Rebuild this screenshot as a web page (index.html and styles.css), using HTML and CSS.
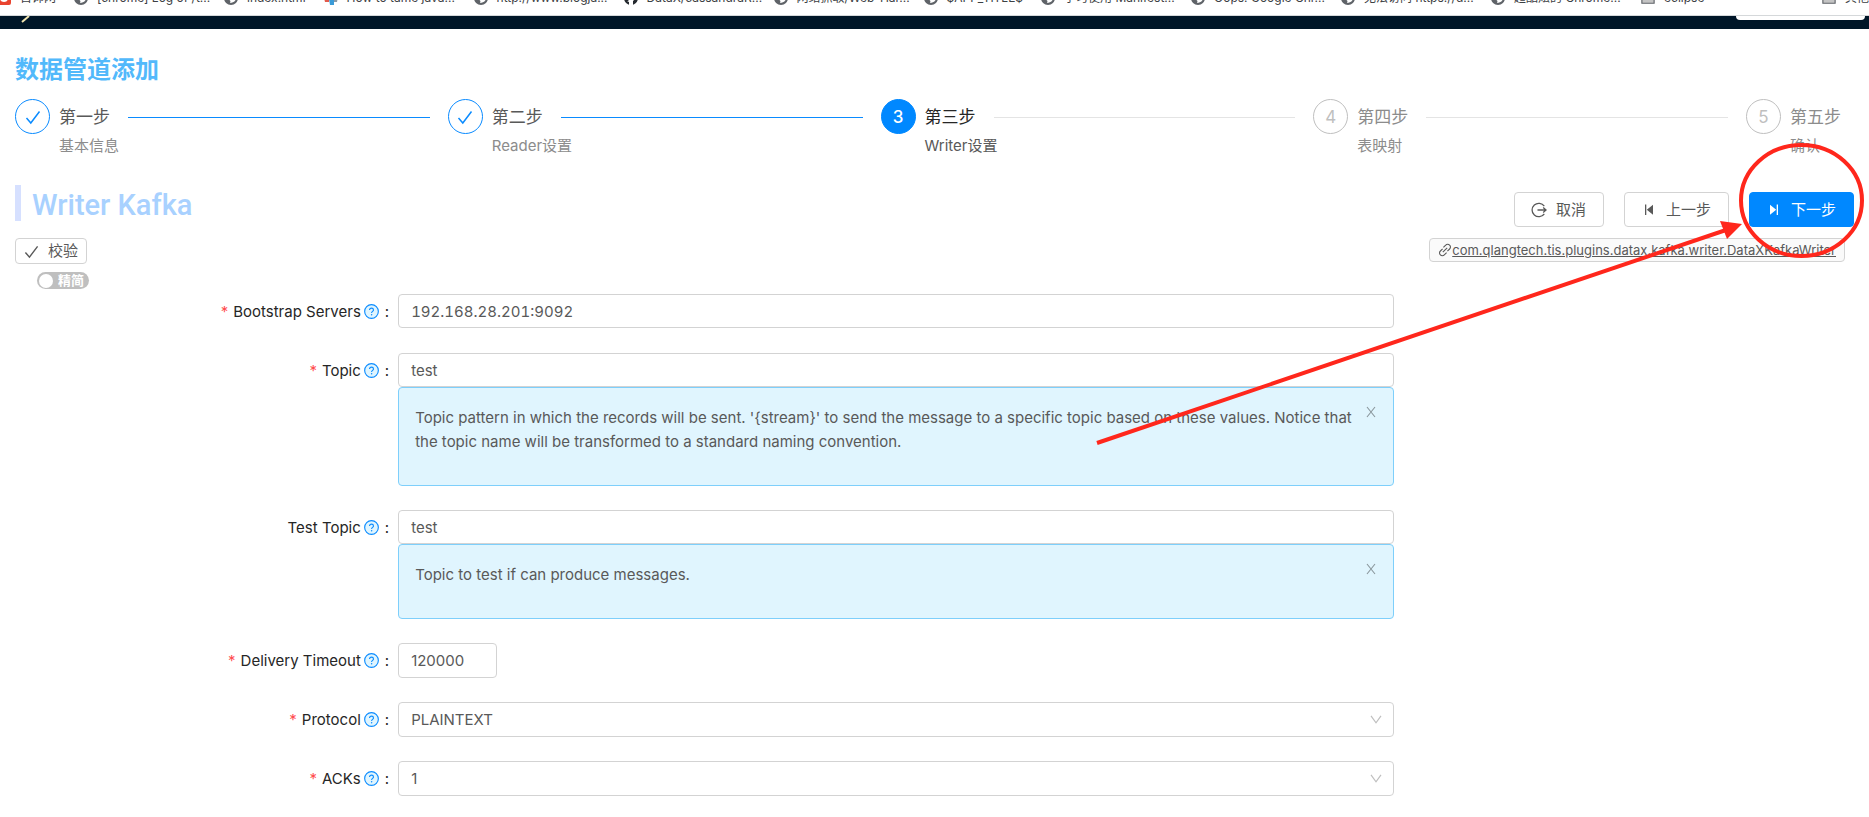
FILE: index.html
```html
<!DOCTYPE html>
<html lang="zh-CN">
<head>
<meta charset="utf-8">
<meta name="viewport" content="width=device-width, initial-scale=1">
<title>数据管道添加</title>
<link rel="stylesheet" href="styles.css">
</head>
<body>
<svg class="defs" aria-hidden="true">
  <symbol id="globe" viewBox="0 0 14 14"><circle cx="7" cy="7" r="7" fill="#5f6368"/><path d="M2 6c2 0 3 1 5 1s2-2 5-3v4c-1 3-4 4-6 4 1-2 0-3-1-3S2 8 2 6z" fill="#fff"/></symbol>
  <symbol id="folder" viewBox="0 0 16 14"><path d="M1 1h5l2 2h7v10H1z" fill="#c4c4c4" stroke="#5f6368" stroke-width="1.3"/></symbol>
  <symbol id="check" viewBox="0 0 16 16"><path d="M1.5 9l4.3 5L14.5 2.5" fill="none" stroke="currentColor" stroke-width="1.5"/></symbol>
  <symbol id="help" viewBox="0 0 16 16"><circle cx="8" cy="8" r="7.3" fill="#e0f5fe" stroke="#0a8bff" stroke-width="1.2"/><path d="M5.9 6.5c0-1.3.9-2.1 2.1-2.1s2.1.8 2.1 1.9c0 1.6-2 1.5-2 3.2" fill="none" stroke="#0a8bff" stroke-width="1.2"/><circle cx="8.1" cy="11.4" r=".8" fill="#0a8bff"/></symbol>
  <symbol id="close" viewBox="0 0 10 12"><path d="M1 1l8 10M9 1L1 11" fill="none" stroke="currentColor" stroke-width="1.1"/></symbol>
  <symbol id="down" viewBox="0 0 12 9"><path d="M1 .8l5 7 5-7" fill="none" stroke="currentColor" stroke-width="1.2"/></symbol>
</svg>

<nav class="bookmarks" aria-label="书签">
  <a class="bookmark" href="#"><svg class="bookmark-icon"><rect width="14" height="14" rx="2" fill="#e9432f"/><circle cx="7" cy="7" r="4" fill="#fff"/></svg><span>首饰网</span></a>
  <a class="bookmark bookmark-long" href="#"><svg class="bookmark-icon"><use href="#globe"/></svg><span>[chrome] Log of /t...</span></a>
  <a class="bookmark" href="#"><svg class="bookmark-icon"><use href="#globe"/></svg><span>index.html</span></a>
  <a class="bookmark bookmark-long" href="#"><svg class="bookmark-icon"><path d="M0 7h5v4H1z" fill="#e25b4c"/><path d="M5 8h5v6H6z" fill="#3a9bd8"/><path d="M10 6h4l-1 5h-3z" fill="#8a9aa8"/></svg><span>How to tame java...</span></a>
  <a class="bookmark bookmark-long" href="#"><svg class="bookmark-icon"><use href="#globe"/></svg><span>http://www.blogja...</span></a>
  <a class="bookmark bookmark-long" href="#"><svg class="bookmark-icon"><circle cx="7" cy="7" r="7" fill="#24292e"/><path d="M5 14v-3l-2-1 2 0c-2-1-2-4 0-5h4c2 1 2 4 0 5v4z" fill="#fff"/></svg><span>DataX/cassandraR...</span></a>
  <a class="bookmark bookmark-long" href="#"><svg class="bookmark-icon"><use href="#globe"/></svg><span>网络抓取/Web-Har...</span></a>
  <a class="bookmark" href="#"><svg class="bookmark-icon"><use href="#globe"/></svg><span>$APP_TITLE$</span></a>
  <a class="bookmark bookmark-long" href="#"><svg class="bookmark-icon"><use href="#globe"/></svg><span>学习使用 Manifest...</span></a>
  <a class="bookmark bookmark-long" href="#"><svg class="bookmark-icon"><use href="#globe"/></svg><span>Oops! Google Chr...</span></a>
  <a class="bookmark bookmark-long" href="#"><svg class="bookmark-icon"><use href="#globe"/></svg><span>无法访问 https://d...</span></a>
  <a class="bookmark bookmark-long" href="#"><svg class="bookmark-icon"><use href="#globe"/></svg><span>超酷炫的 Chrome...</span></a>
  <a class="bookmark" href="#"><svg class="bookmark-icon"><use href="#folder"/></svg><span>eclipse</span></a>
  <a class="bookmark bookmark-other" href="#"><svg class="bookmark-icon"><use href="#folder"/></svg><span>其他</span></a>
</nav>

<header class="topbar">
  <svg class="topbar-mark" width="10" height="7" aria-hidden="true"><path d="M1 6l7-6" stroke="#f3e6b0" stroke-width="2"/></svg>
  <div class="topbar-field"></div>
</header>

<main class="page">
  <h1 class="page-title">数据管道添加</h1>

  <ol class="steps">
    <li class="step step-done">
      <span class="step-icon"><svg width="16" height="16"><use href="#check"/></svg></span>
      <div class="step-body"><div class="step-title">第一步</div><div class="step-text">基本信息</div></div>
    </li>
    <li class="step step-done">
      <span class="step-icon"><svg width="16" height="16"><use href="#check"/></svg></span>
      <div class="step-body"><div class="step-title">第二步</div><div class="step-text">Reader设置</div></div>
    </li>
    <li class="step step-active" aria-current="step">
      <span class="step-icon">3</span>
      <div class="step-body"><div class="step-title">第三步</div><div class="step-text">Writer设置</div></div>
    </li>
    <li class="step">
      <span class="step-icon">4</span>
      <div class="step-body"><div class="step-title">第四步</div><div class="step-text">表映射</div></div>
    </li>
    <li class="step step-last">
      <span class="step-icon">5</span>
      <div class="step-body"><div class="step-title">第五步</div><div class="step-text">确认</div></div>
    </li>
  </ol>

  <div class="section-head">
    <h2 class="section-title">Writer Kafka</h2>
    <div class="actions">
      <button class="btn" type="button"><svg width="16" height="16" viewBox="0 0 16 16"><path d="M13.3 4.2A6.7 6.7 0 1 0 13.3 11.8M6.5 8h8M12.2 5.6L15 8l-2.8 2.4" fill="none" stroke="currentColor" stroke-width="1.3"/></svg><span>取消</span></button>
      <button class="btn" type="button"><svg width="16" height="16" viewBox="0 0 16 16"><path d="M4 2.5h1.3v10.5H4zM12 2.8v10L5.8 7.8z" fill="currentColor"/></svg><span>上一步</span></button>
      <button class="btn btn-primary" type="button"><svg width="16" height="16" viewBox="0 0 16 16"><path d="M10.7 2.5H12v10.5h-1.3zM4 2.8v10l6.2-5z" fill="currentColor"/></svg><span>下一步</span></button>
    </div>
  </div>

  <div class="toolbar">
    <button class="btn-small" type="button"><svg width="16" height="16"><use href="#check"/></svg><span>校验</span></button>
    <a class="plugin-tag" href="#"><svg width="14" height="14" viewBox="0 0 14 14"><g fill="none" stroke="currentColor" stroke-width="1.1"><path d="M5.4 4.4l2.3-2.3a2.6 2.6 0 0 1 3.9 0 2.6 2.6 0 0 1 0 3.9L9.4 8.2"/><path d="M8.6 9.6l-2.3 2.3a2.6 2.6 0 0 1-3.9 0 2.6 2.6 0 0 1 0-3.9L4.6 5.8"/><path d="M4.8 9.2l4.4-4.4"/></g></svg><span>com.qlangtech.tis.plugins.datax.kafka.writer.DataXKafkaWriter</span></a>
  </div>

  <label class="switch"><input class="switch-input" type="checkbox" role="switch"><span class="switch-text">精简</span></label>

  <form class="form">
    <div class="field">
      <label class="label" for="servers"><span class="required">*</span><span>Bootstrap Servers</span><svg class="help-icon"><use href="#help"/></svg><span class="colon">:</span></label>
      <div class="control"><input class="input input-host" id="servers" type="text" value="192.168.28.201:9092"></div>
    </div>
    <div class="field">
      <label class="label" for="topic"><span class="required">*</span><span>Topic</span><svg class="help-icon"><use href="#help"/></svg><span class="colon">:</span></label>
      <div class="control">
        <input class="input" id="topic" type="text" value="test">
        <div class="hint"><p class="hint-text">Topic pattern in which the records will be sent. '{stream}' to send the message to a specific topic based on these values. Notice that the topic name will be transformed to a standard naming convention.</p><button class="hint-close" type="button" aria-label="关闭"><svg width="10" height="12"><use href="#close"/></svg></button></div>
      </div>
    </div>
    <div class="field">
      <label class="label" for="test-topic"><span>Test Topic</span><svg class="help-icon"><use href="#help"/></svg><span class="colon">:</span></label>
      <div class="control">
        <input class="input" id="test-topic" type="text" value="test">
        <div class="hint"><p class="hint-text">Topic to test if can produce messages.</p><button class="hint-close" type="button" aria-label="关闭"><svg width="10" height="12"><use href="#close"/></svg></button></div>
      </div>
    </div>
    <div class="field">
      <label class="label" for="timeout"><span class="required">*</span><span>Delivery Timeout</span><svg class="help-icon"><use href="#help"/></svg><span class="colon">:</span></label>
      <div class="control"><input class="input input-number" id="timeout" type="text" inputmode="numeric" value="120000"></div>
    </div>
    <div class="field">
      <label class="label" for="protocol"><span class="required">*</span><span>Protocol</span><svg class="help-icon"><use href="#help"/></svg><span class="colon">:</span></label>
      <div class="control"><select class="input select" id="protocol"><option>PLAINTEXT</option></select><svg class="select-arrow"><use href="#down"/></svg></div>
    </div>
    <div class="field">
      <label class="label" for="acks"><span class="required">*</span><span>ACKs</span><svg class="help-icon"><use href="#help"/></svg><span class="colon">:</span></label>
      <div class="control"><select class="input select" id="acks"><option>1</option></select><svg class="select-arrow"><use href="#down"/></svg></div>
    </div>
  </form>
</main>

<svg class="callout" width="780" height="310" viewBox="1089 140 780 310" aria-hidden="true">
  <ellipse cx="1801.5" cy="200.5" rx="60.5" ry="55.5" fill="none" stroke="#ff271c" stroke-width="4"/>
  <path d="M1097 443L1726 230" stroke="#ff271c" stroke-width="4"/>
  <path d="M1742 224l-22-3 7 18z" fill="#ff271c"/>
</svg>
</body>
</html>
```

FILE: styles.css
```css
* { box-sizing: border-box; }

body {
  position: relative;
  margin: 0;
  background: #fff;
  color: #595959;
  font: 15px/24px Inter, "Noto Sans CJK SC", sans-serif;
}

button, input, select { font: inherit; color: inherit; }

.defs { position: absolute; width: 0; height: 0; }

.bookmarks {
  display: flex;
  align-items: flex-end;
  gap: 18px;
  height: 16px;
  margin-left: -3px;
  padding-bottom: 9px;
  overflow: hidden;
  border-bottom: 1px solid #d5d8da;
  font-size: 12px;
  line-height: 16px;
}
.bookmark {
  display: flex;
  flex: none;
  align-items: center;
  gap: 9px;
  color: #3c4043;
  text-decoration: none;
  white-space: nowrap;
}
.bookmark-long { width: 132px; }
.bookmark-icon { flex: none; width: 14px; height: 14px; }
.bookmark-other { margin-left: auto; }

.topbar {
  display: flex;
  align-items: flex-start;
  justify-content: space-between;
  height: 13px;
  padding: 0 4px 0 21px;
  background: #001628;
}
.topbar-field {
  width: 129px;
  height: 4px;
  border-radius: 0 0 4px 4px;
  background: #fff;
}

.page { padding: 24px 15px 20px; }

.page-title {
  margin: 0 0 12px;
  color: #52b9fb;
  font-size: 24px;
  font-weight: 700;
  line-height: 34px;
}

.steps {
  display: flex;
  gap: 18px;
  margin: 0 0 28px;
  padding: 0;
  list-style: none;
}
.step {
  display: flex;
  flex: 1;
  gap: 9px;
  color: #8c8c8c;
}
.step-last { flex: none; padding-right: 13px; }
.step-icon {
  display: flex;
  flex: none;
  align-items: center;
  justify-content: center;
  width: 35px;
  height: 35px;
  border: 1px solid #bfbfbf;
  border-radius: 50%;
  color: #bfbfbf;
  font-size: 17px;
}
.step-body { flex: 1; }
.step-title {
  display: flex;
  align-items: center;
  gap: 18px;
  font-size: 17px;
  line-height: 36px;
  white-space: nowrap;
}
.step:not(.step-last) .step-title::after {
  content: "";
  flex: 1;
  height: 1px;
  background: #e4e4e4;
}
.step-text { line-height: 22px; }
.step-done .step-icon { border-color: #0a8bff; color: #0a8bff; }
.step-done .step-title { color: #595959; }
.step.step-done .step-title::after { background: #0a8bff; }
.step-active .step-icon {
  border-color: #0088ff;
  background: #0088ff;
  color: #fff;
  font-weight: 500;
}
.step-active .step-title { color: #262626; }
.step-active .step-text { color: #595959; }

.section-head {
  display: flex;
  align-items: flex-start;
  justify-content: space-between;
  margin-bottom: 11px;
}
.section-title {
  margin: 0;
  padding: 4px 0 0 11px;
  border-left: 6px solid #d6e0ff;
  color: #a8d1ff;
  font-family: Roboto, sans-serif;
  font-size: 29px;
  font-weight: 500;
  line-height: 32px;
}
.actions { display: flex; gap: 20px; padding-top: 7px; }

.btn {
  display: flex;
  align-items: center;
  gap: 9px;
  height: 35px;
  padding: 0 17px 0 16px;
  border: 1px solid #d3d3d3;
  border-radius: 4px;
  background: #fff;
}
.btn-primary { border-color: #0088ff; background: #0088ff; color: #fff; }

.toolbar {
  display: flex;
  align-items: flex-start;
  justify-content: space-between;
  height: 27px;
  padding-right: 9px;
}
.btn-small {
  display: flex;
  align-items: center;
  gap: 9px;
  height: 26px;
  padding: 0 8px;
  border: 1px solid #d3d3d3;
  border-radius: 4px;
  background: #fff;
}
.btn-small svg { width: 15px; height: 15px; }
.plugin-tag {
  display: flex;
  align-items: center;
  height: 24px;
  padding: 0 8px;
  border: 1px solid #d3d3d3;
  border-radius: 4px;
  background: #fafafa;
  color: #595959;
  font-size: 13px;
  text-decoration: underline;
}

.switch {
  display: flex;
  align-items: center;
  gap: 5px;
  width: 52px;
  height: 17px;
  margin: 7px 0 5px 22px;
  padding: 0 2px;
  border-radius: 9px;
  background: #bfbfbf;
  color: #fff;
  font-size: 13px;
  font-weight: 700;
  line-height: 17px;
}
.switch-input {
  flex: none;
  appearance: none;
  width: 14px;
  height: 14px;
  margin: 0;
  border-radius: 50%;
  background: #fff;
}

.form { display: grid; gap: 24px; }
.field { display: grid; grid-template-columns: 5fr 13fr 6fr; }
.label {
  display: flex;
  align-items: center;
  justify-content: flex-end;
  height: 35px;
  padding-right: 9px;
  color: #262626;
}
.required { margin-right: 5px; color: #ff4d4f; }
.help-icon { width: 15px; height: 15px; margin: 0 6px 0 3px; }
.control { position: relative; }
.input {
  display: block;
  width: 100%;
  height: 34px;
  padding: 0 12px;
  border: 1px solid #d3d3d3;
  border-radius: 4px;
  background: #fff;
}
.input-host { font-variant-numeric: tabular-nums; }
.input-number { width: 99px; height: 35px; }
.select { height: 35px; appearance: none; }
.select-arrow {
  position: absolute;
  top: 13px;
  right: 12px;
  width: 12px;
  height: 9px;
  color: #bfbfbf;
  pointer-events: none;
}

.hint {
  display: flex;
  align-items: flex-start;
  gap: 6px;
  padding: 18px 17px 31px 16px;
  border: 1px solid #7ecffb;
  border-radius: 4px;
  background: #e0f5fe;
}
.hint-text { flex: 1; margin: 0; }
.hint-close {
  display: flex;
  padding: 0;
  border: 0;
  background: none;
  color: #8a979d;
}

.callout {
  position: absolute;
  top: 140px;
  right: 0;
  pointer-events: none;
}
```
